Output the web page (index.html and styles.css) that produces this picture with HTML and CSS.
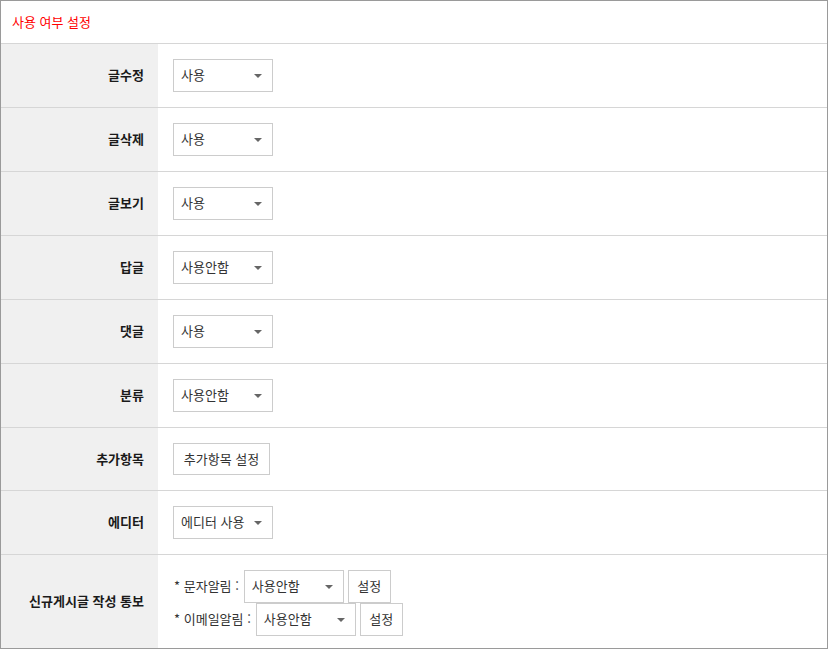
FILE: index.html
```html
<!DOCTYPE html>
<html lang="ko">
<head>
<meta charset="utf-8">
<link rel="stylesheet" href="styles.css">
</head>
<body>
<div class="panel">
  <div class="panel-head">사용 여부 설정</div>
  <div class="row">
    <div class="label">글수정</div>
    <div class="field"><span class="select">사용</span></div>
  </div>
  <div class="row">
    <div class="label">글삭제</div>
    <div class="field"><span class="select">사용</span></div>
  </div>
  <div class="row">
    <div class="label">글보기</div>
    <div class="field"><span class="select">사용</span></div>
  </div>
  <div class="row">
    <div class="label">답글</div>
    <div class="field"><span class="select">사용안함</span></div>
  </div>
  <div class="row">
    <div class="label">댓글</div>
    <div class="field"><span class="select">사용</span></div>
  </div>
  <div class="row">
    <div class="label">분류</div>
    <div class="field"><span class="select">사용안함</span></div>
  </div>
  <div class="row">
    <div class="label">추가항목</div>
    <div class="field"><span class="btn btn-wide">추가항목 설정</span></div>
  </div>
  <div class="row">
    <div class="label">에디터</div>
    <div class="field"><span class="select">에디터 사용</span></div>
  </div>
  <div class="row row-last">
    <div class="label">신규게시글 작성 통보</div>
    <div class="field field-stack">
      <div class="line"><span class="opt">* 문자알림 :</span><span class="select">사용안함</span><span class="btn btn-small">설정</span></div>
      <div class="line"><span class="opt">* 이메일알림 :</span><span class="select">사용안함</span><span class="btn btn-small">설정</span></div>
    </div>
  </div>
</div>
</body>
</html>
```
FILE: styles.css
```css
* { box-sizing: border-box; }
html, body { margin: 0; padding: 0; background: #fff; }
body {
  font-family: "Noto Sans CJK KR", "Noto Sans", sans-serif;
  font-size: 13px;
  color: #333;
}
.panel {
  width: 828px;
  height: 649px;
  border: 1px solid #9a9a9a;
  display: flex;
  flex-direction: column;
}
.panel-head {
  height: 43px;
  border-bottom: 1px solid #d6d6d6;
  padding-left: 11px;
  padding-bottom: 2px;
  display: flex;
  align-items: center;
  color: #ff0000;
}
.row {
  display: flex;
  border-bottom: 1px solid #d6d6d6;
}
.row-last {
  border-bottom: none;
  flex: 1;
}
.label {
  width: 157px;
  flex: none;
  background: #f0f0f0;
  display: flex;
  align-items: center;
  justify-content: flex-end;
  padding-right: 14px;
  padding-bottom: 2px;
  font-weight: bold;
  color: #1a1a1a;
}
.field {
  flex: 1;
  padding: 15px 15px;
  display: flex;
  align-items: center;
}
.field-stack {
  flex-direction: column;
  align-items: flex-start;
  padding-top: 15px;
  padding-bottom: 12px;
}
.select {
  position: relative;
  display: inline-flex;
  align-items: center;
  width: 100px;
  height: 33px;
  border: 1px solid #cccccc;
  padding-left: 7px;
  padding-bottom: 2px;
  color: #333;
  background: #fff;
}
.select::after {
  content: "";
  position: absolute;
  right: 10px;
  top: 14px;
  border-left: 4px solid transparent;
  border-right: 4px solid transparent;
  border-top: 4px solid #666;
}
.btn {
  display: inline-flex;
  align-items: center;
  justify-content: center;
  border: 1px solid #cccccc;
  padding-bottom: 2px;
  background: #fff;
  color: #333;
}
.btn-wide { width: 97px; height: 32px; }
.btn-small { width: 43px; height: 33px; margin-left: 4px; }
.line {
  display: flex;
  align-items: center;
}
.opt {
  padding-left: 1px;
  padding-bottom: 2px;
  margin-right: 5px;
  color: #333;
}
```
